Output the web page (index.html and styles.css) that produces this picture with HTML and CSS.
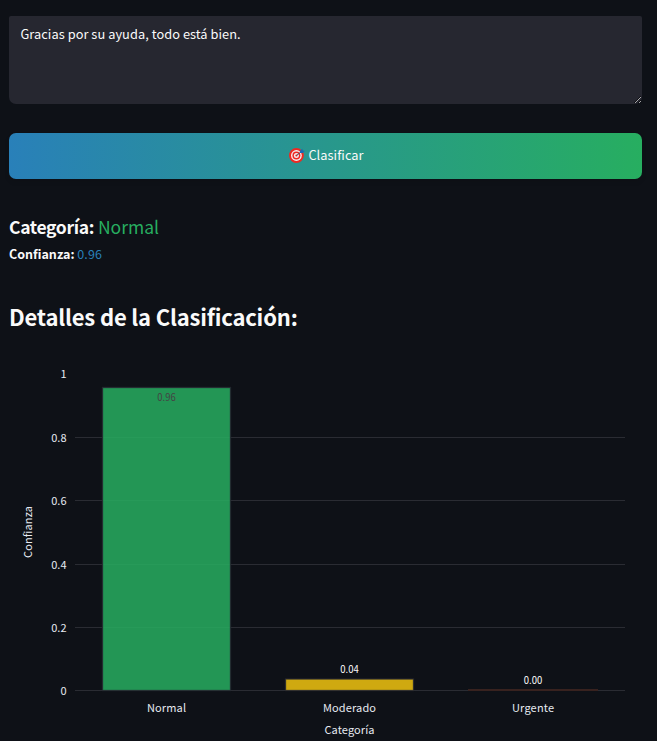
FILE: index.html
```html
<!DOCTYPE html>
<html lang="es">
<head>
<meta charset="utf-8">
<title>Clasificador</title>
<link rel="stylesheet" href="styles.css">
</head>
<body>
<main class="page">
  <textarea class="message" spellcheck="false">Gracias por su ayuda, todo está bien.</textarea>
  <button class="classify" type="button">
    <svg class="target" viewBox="0 0 16 16" aria-hidden="true">
      <circle cx="7.4" cy="8.5" r="7.4" fill="#ef2922"/>
      <circle cx="7.4" cy="8.5" r="5.4" fill="#f5eeee"/>
      <circle cx="7.4" cy="8.5" r="4" fill="#ef2922"/>
      <circle cx="7.4" cy="8.5" r="2.5" fill="#f5eeee"/>
      <circle cx="7.4" cy="8.5" r="1.1" fill="#ef2922"/>
      <path d="M7.4 8.5 12.5 4.7" stroke="#41556c" stroke-width="1"/>
      <path d="M10.8 5.9 11.2 3.6 13.3 1.7 13.7 3.4 15.7 3.9 13.8 6.1Z" fill="#1769b5"/>
    </svg>
    <span>Clasificar</span>
  </button>
  <p class="category"><strong>Categoría:</strong> <span class="normal">Normal</span></p>
  <p class="confidence"><strong>Confianza:</strong> <span class="score">0.96</span></p>
  <h2 class="heading">Detalles de la Clasificación:</h2>
  <svg class="chart" viewBox="9 345 633 396" role="img">
    <path class="grid" d="M75 437.5H625M75 500.5H625M75 564.5H625M75 627.5H625M75 690.5H625"/>
    <g class="bars">
      <rect x="102.5" y="387.5" width="128" height="303" fill="#27ae60"/>
      <rect x="285.5" y="679" width="128" height="11.5" fill="#f1c40f"/>
      <path d="M468 690H598" class="zero"/>
    </g>
    <g class="ticks">
      <text x="66.5" y="378">1</text>
      <text x="66.5" y="442">0.8</text>
      <text x="66.5" y="505">0.6</text>
      <text x="66.5" y="569">0.4</text>
      <text x="66.5" y="632">0.2</text>
      <text x="66.5" y="695">0</text>
    </g>
    <g class="labels">
      <text x="166.5" y="712" textLength="39">Normal</text>
      <text x="349.5" y="712" textLength="53">Moderado</text>
      <text x="533" y="712" textLength="42">Urgente</text>
      <text x="349.5" y="734" textLength="50">Categoría</text>
      <text transform="translate(32 532) rotate(-90)" textLength="52">Confianza</text>
    </g>
    <g class="values">
      <text class="inside" x="166.5" y="401" textLength="18.5" lengthAdjust="spacingAndGlyphs">0.96</text>
      <text x="349.5" y="673" textLength="18.5" lengthAdjust="spacingAndGlyphs">0.04</text>
      <text x="533" y="684" textLength="18.5" lengthAdjust="spacingAndGlyphs">0.00</text>
    </g>
  </svg>
</main>
</body>
</html>
```
FILE: styles.css
```css
* { box-sizing: border-box; }
body {
  margin: 0;
  background: #0e1117;
  color: #fafafa;
  font-family: "Noto Sans CJK JP", "Open Sans", sans-serif;
  overflow: hidden;
}
.page {
  display: flex;
  flex-direction: column;
  height: 741px;
  padding: 16px 15px 0 9px;
}
.message {
  flex: none;
  width: 100%;
  height: 88px;
  padding: 8px 11.5px;
  border: 0;
  border-radius: 2px 2px 7px 7px;
  outline: 0;
  background: #262730;
  color: #fafafa;
  font: 400 12.8px/20px "Noto Sans CJK JP", sans-serif;
  letter-spacing: .05px;
  resize: vertical;
}
.classify {
  flex: none;
  display: flex;
  align-items: center;
  justify-content: center;
  gap: 3.5px;
  height: 46px;
  margin-top: 29px;
  padding: 0 0 2px 1.5px;
  border: 0;
  border-radius: 7px;
  background: linear-gradient(90deg, #2980b9, #27ae60);
  box-shadow: 0 3px 5px rgba(0, 0, 0, .1);
  color: #fafafa;
  font: 400 12.8px/20px "Noto Sans CJK JP", sans-serif;
  letter-spacing: .05px;
}
.target { width: 16px; height: 16px; }
.category, .confidence, .heading { margin: 0; white-space: nowrap; }
.category { margin-top: 34px; font-size: 17.5px; line-height: 28px; }
.category strong { letter-spacing: -.35px; }
.confidence { margin-top: 3px; font-size: 12.5px; line-height: 20px; }
.normal { color: #27ae60; }
.score { color: #2980b9; letter-spacing: .1px; }
.heading { margin-top: 36px; font-size: 22px; line-height: 32px; font-weight: 600; letter-spacing: -.18px; }
.chart { flex: none; display: block; width: 633px; height: 396px; margin-top: 13px; }
.grid { stroke: #2a2c33; stroke-width: 1; }
.bars rect { fill-opacity: .85; stroke: #262730; stroke-width: 1.3; stroke-opacity: .85; }
.zero { stroke: #38221f; stroke-width: 2; }
.ticks text { fill: #e6eaf1; font-size: 11px; text-anchor: end; }
.labels text { fill: #e6eaf1; font-size: 11px; text-anchor: middle; }
.values text { fill: #fafafa; font-size: 10px; text-anchor: middle; }
.values .inside { fill: #444; }
```
